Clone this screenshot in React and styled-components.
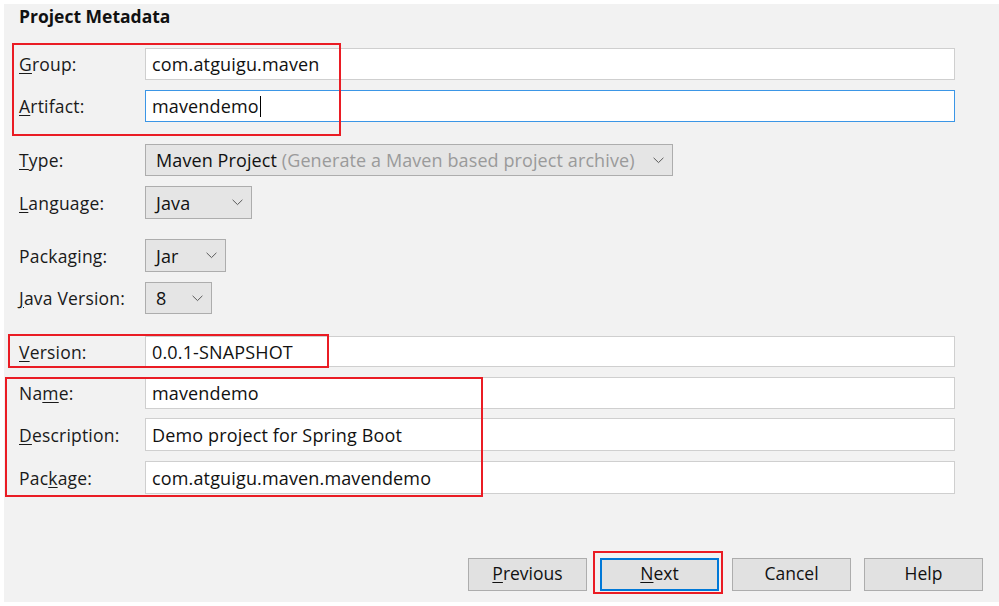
import React from 'react';
import styled, { createGlobalStyle } from 'styled-components';

const GlobalStyle = createGlobalStyle`
  html, body {
    margin: 0;
    padding: 0;
    background: #ffffff;
  }
  body {
    font-family: "Open Sans", "Noto Sans", sans-serif;
    color: #1a1a1a;
  }
`;

const Window = styled.div`
  width: 999px;
  height: 606px;
  padding: 4px 0 4px 4px;
  box-sizing: border-box;
`;

const Panel = styled.div`
  position: relative;
  height: 598px;
  background: #f2f2f2;
  padding: 0 0 0 15px;
  box-sizing: border-box;
`;

const Title = styled.h2`
  margin: 0;
  height: 24px;
  font-size: 17.5px;
  font-weight: 700;
  line-height: 24px;
  color: #111;
`;

const Form = styled.div`
  display: flex;
  flex-direction: column;
  padding-top: 20px;
`;

const Row = styled.div`
  display: flex;
  align-items: center;
  margin-top: ${(p) => p.$gap || 0}px;
  height: ${(p) => p.$h || 32}px;
`;

const Label = styled.label`
  width: 126px;
  flex: none;
  font-size: 17.5px;
  letter-spacing: 0.2px;
  color: #1a1a1a;
  u {
    text-decoration: underline;
    text-underline-offset: 2px;
  }
`;

const Input = styled.div`
  width: 810px;
  height: 100%;
  box-sizing: border-box;
  background: #ffffff;
  border: ${(p) => (p.$focused ? '1.5px solid #3b96e6' : '1.5px solid #cfcfcf')};
  padding-left: 6px;
  display: flex;
  align-items: center;
  font-size: 18px;
  letter-spacing: 0.15px;
  color: #111;
`;

const Caret = styled.span`
  display: inline-block;
  width: 1px;
  height: 21px;
  background: #000;
  margin-left: 1px;
`;

const Select = styled.div`
  width: ${(p) => p.$w}px;
  height: 100%;
  box-sizing: border-box;
  background: #e5e5e5;
  border: 1px solid #adadad;
  padding: 0 8px 0 10px;
  display: flex;
  align-items: center;
  justify-content: space-between;
  font-size: 18px;
  letter-spacing: 0.1px;
  color: #111;
  white-space: nowrap;
`;

const Hint = styled.span`
  color: #9a9a9a;
`;

const Chevron = () => (
  <svg width="11" height="7" viewBox="0 0 11 7">
    <path d="M0.6 0.8 L5.5 5.6 L10.4 0.8" fill="none" stroke="#5a5a5a" strokeWidth="1" />
  </svg>
);

const ButtonBar = styled.div`
  position: absolute;
  left: 464px;
  top: 554px;
  display: flex;
  gap: 13px;
`;

const Button = styled.button`
  width: 119px;
  height: 33px;
  box-sizing: border-box;
  background: #e1e1e1;
  border: ${(p) => (p.$primary ? '2px solid #0078d7' : '1px solid #adadad')};
  font-family: inherit;
  font-size: 17.5px;
  line-height: 1;
  padding: 0 0 2px;
  color: #111;
  u {
    text-underline-offset: 2px;
  }
`;

const Mark = styled.div`
  position: absolute;
  left: ${(p) => p.$x}px;
  top: ${(p) => p.$y}px;
  width: ${(p) => p.$w}px;
  height: ${(p) => p.$h}px;
  border: 2px solid #ea1c24;
  box-sizing: border-box;
  pointer-events: none;
`;

const Lbl = ({ text, k }) => (
  <Label>
    {text.slice(0, k)}
    <u>{text[k]}</u>
    {text.slice(k + 1)}
  </Label>
);

export default function App() {
  return (
    <>
      <GlobalStyle />
      <Window>
        <Panel>
          <Title>Project Metadata</Title>
          <Form>
            <Row>
              <Lbl text="Group:" k={0} />
              <Input>com.atguigu.maven</Input>
            </Row>
            <Row $gap={10}>
              <Lbl text="Artifact:" k={0} />
              <Input $focused>
                mavendemo<Caret />
              </Input>
            </Row>
            <Row $gap={22}>
              <Lbl text="Type:" k={0} />
              <Select $w={528}>
                <span>
                  Maven Project <Hint>(Generate a Maven based project archive)</Hint>
                </span>
                <Chevron />
              </Select>
            </Row>
            <Row $gap={10} $h={33}>
              <Lbl text="Language:" k={0} />
              <Select $w={107}>
                <span>Java</span>
                <Chevron />
              </Select>
            </Row>
            <Row $gap={20} $h={33}>
              <Lbl text="Packaging:" k={5} />
              <Select $w={81}>
                <span>Jar</span>
                <Chevron />
              </Select>
            </Row>
            <Row $gap={10}>
              <Lbl text="Java Version:" k={0} />
              <Select $w={67}>
                <span>8</span>
                <Chevron />
              </Select>
            </Row>
            <Row $gap={22} $h={31}>
              <Lbl text="Version:" k={0} />
              <Input>0.0.1-SNAPSHOT</Input>
            </Row>
            <Row $gap={10}>
              <Lbl text="Name:" k={2} />
              <Input>mavendemo</Input>
            </Row>
            <Row $gap={9} $h={33}>
              <Lbl text="Description:" k={0} />
              <Input>Demo project for Spring Boot</Input>
            </Row>
            <Row $gap={10} $h={33}>
              <Lbl text="Package:" k={3} />
              <Input>com.atguigu.maven.mavendemo</Input>
            </Row>
          </Form>

          <ButtonBar>
            <Button>
              <u>P</u>revious
            </Button>
            <Button $primary>
              <u>N</u>ext
            </Button>
            <Button>Cancel</Button>
            <Button>Help</Button>
          </ButtonBar>

          <Mark $x={8} $y={39} $w={329} $h={93} />
          <Mark $x={4} $y={330} $w={321} $h={34} />
          <Mark $x={1} $y={373} $w={478} $h={120} />
          <Mark $x={589} $y={547} $w={130} $h={43} />
        </Panel>
      </Window>
    </>
  );
}
